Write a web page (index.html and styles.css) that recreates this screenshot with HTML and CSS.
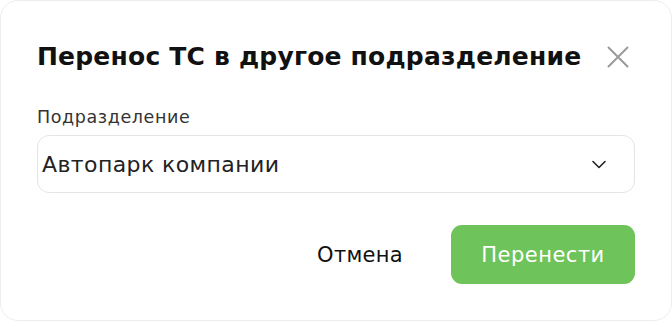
FILE: index.html
```html
<!DOCTYPE html>
<html lang="ru">
<head>
<meta charset="utf-8">
<link rel="stylesheet" href="styles.css">
</head>
<body>
<div class="modal">
  <div class="header">
    <h1 class="title">Перенос ТС в другое подразделение</h1>
    <button class="close" aria-label="Закрыть">
      <svg width="22" height="22" viewBox="0 0 22 22"><path d="M1.5 1.5 L20.5 20.5 M20.5 1.5 L1.5 20.5" stroke="#9a9a9a" stroke-width="2" fill="none" stroke-linecap="round"/></svg>
    </button>
  </div>
  <div class="field">
    <div class="label">Подразделение</div>
    <div class="select">
      <span class="value">Автопарк компании</span>
      <svg width="14" height="9" viewBox="0 0 14 9"><path d="M1 1.5 L7 7.5 L13 1.5" stroke="#222" stroke-width="1.6" fill="none" stroke-linecap="round" stroke-linejoin="round"/></svg>
    </div>
  </div>
  <div class="actions">
    <button class="btn cancel">Отмена</button>
    <button class="btn primary">Перенести</button>
  </div>
</div>
</body>
</html>
```
FILE: styles.css
```css
* { box-sizing: border-box; }
html, body { margin: 0; padding: 0; background: #fff; }
body { width: 672px; height: 321px; overflow: hidden; font-family: "DejaVu Sans", sans-serif; color: #1a1a1a; }
.modal {
  width: 672px; height: 321px;
  border: 1px solid #ededed;
  border-radius: 18px;
  padding: 38px 36px 0 36px;
  display: flex; flex-direction: column;
}
.header { display: flex; align-items: center; justify-content: space-between; height: 36px; }
.title { margin: 0; font-size: 25px; font-weight: 700; color: #111; letter-spacing: 0.2px; line-height: 36px; }
.close { border: 0; background: none; padding: 0; margin-right: 6px; width: 22px; height: 22px; display: flex; }
.field { margin-top: 32px; }
.label { font-size: 17.5px; color: #333; line-height: 20px; letter-spacing: 0.6px; }
.select {
  margin-top: 8px;
  height: 58px;
  border: 1px solid #e4e4e4;
  border-radius: 12px;
  display: flex; align-items: center; justify-content: space-between;
  padding: 0 28px 0 4px;
}
.value { font-size: 22px; color: #222; letter-spacing: 0.4px; }
.actions { margin-top: 32px; display: flex; justify-content: flex-end; align-items: center; gap: 48px; }
.btn { border: 0; font-family: inherit; font-size: 21px; cursor: pointer; }
.cancel { background: none; color: #111; padding: 0; letter-spacing: 0.3px; }
.primary { background: #6ec35a; color: #fff; width: 184px; height: 59px; border-radius: 11px; letter-spacing: 0.5px; }
```
